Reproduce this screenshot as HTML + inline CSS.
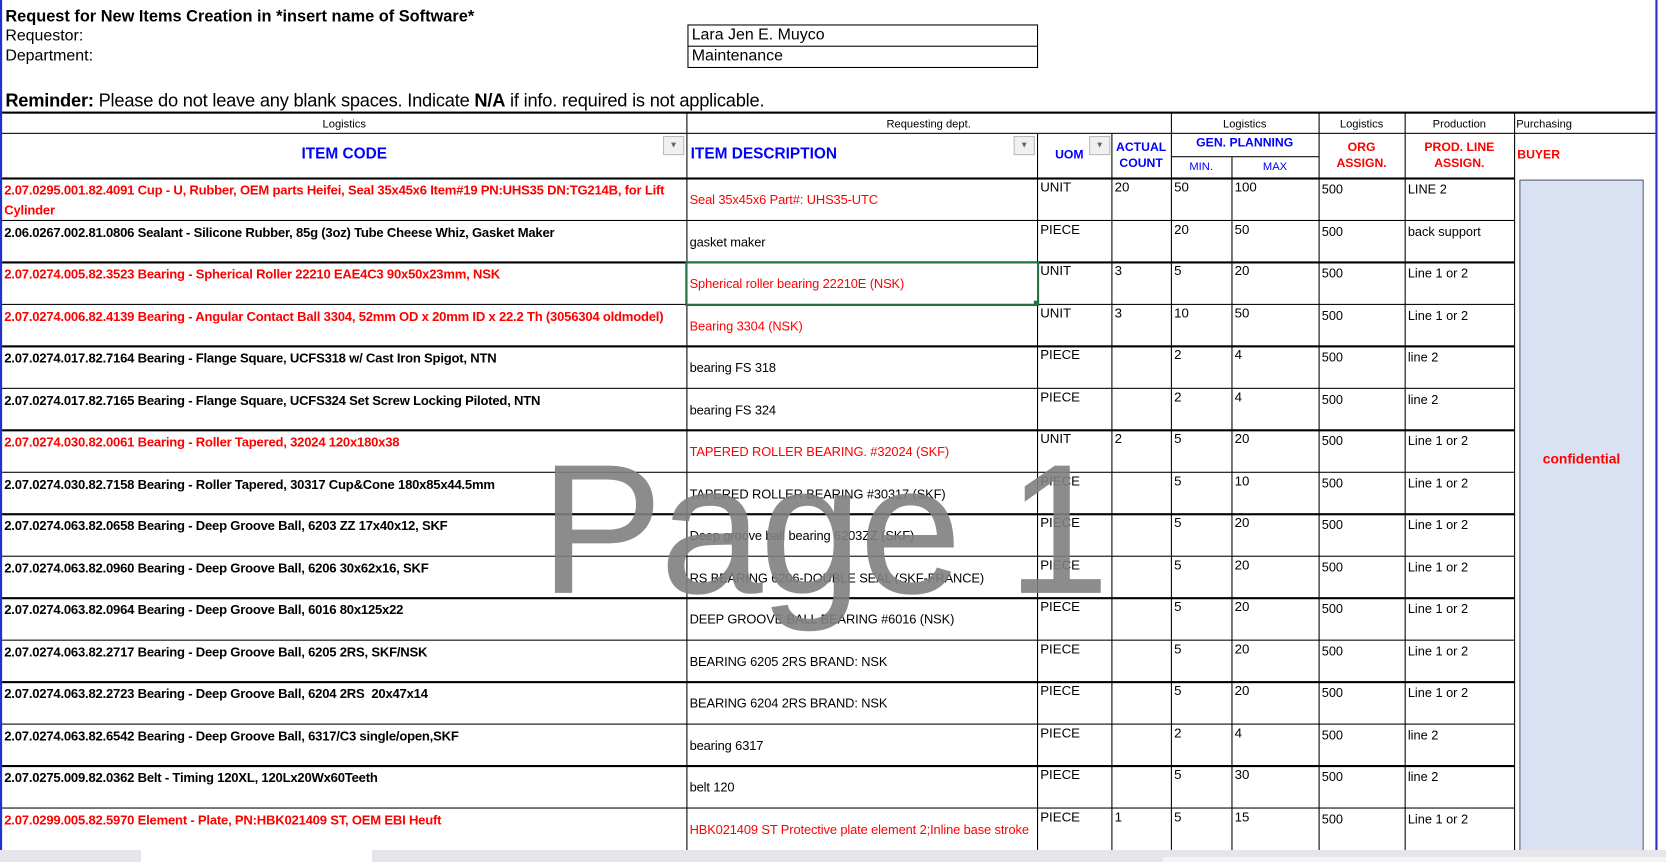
<!DOCTYPE html>
<html><head><meta charset="utf-8"><style>
*{margin:0;padding:0;box-sizing:border-box}
body{width:1666px;height:862px;overflow:hidden;background:#fff;position:relative;font-family:"Liberation Sans",Arial,sans-serif;color:#000}
#w{position:absolute;left:0;top:0;width:1568px;height:800px;transform:scale(1.0625);transform-origin:0 0}
.a{position:absolute;white-space:nowrap}
.v{position:absolute;top:106px;height:694px;width:1px;background:#000}
.h{position:absolute;left:2px;width:1423px;height:1.6px;background:#000}
.r{position:absolute;left:0;width:1558px;height:40px}
.r span{position:absolute;white-space:nowrap;overflow:hidden}
.c1{left:4px;top:2px;width:640px;font-weight:bold;font-size:12.3px;letter-spacing:-0.2px;line-height:19px}
.c2{left:649px;top:13px;width:326px;font-size:12.1px;letter-spacing:-0.1px}
.c3{left:979px;top:1px;font-size:12.5px}
.c4{left:1049px;top:1px;font-size:12.5px}
.c5{left:1105px;top:1px;font-size:12.5px}
.c6{left:1162px;top:1px;font-size:12.5px}
.c7{left:1244px;top:3px;font-size:12px}
.c8{left:1325px;top:3px;font-size:12px}
.red{color:#f00}
.hd{position:absolute;font-size:10.5px;text-align:center}
.bl{color:#00f;font-weight:bold}
.rd{color:#f00;font-weight:bold}
</style></head><body>
<div id="w">
<div class="a" style="left:0;top:0;width:2px;height:800px;background:#2233cc"></div>
<div class="a" style="left:1558px;top:0;width:2px;height:800px;background:#2233cc"></div>
<div class="a" style="left:5px;top:7px;font-size:15.4px;font-weight:bold">Request for New Items Creation in *insert name of Software*</div>
<div class="a" style="left:5px;top:25px;font-size:15px">Requestor:</div>
<div class="a" style="left:5px;top:44px;font-size:15px">Department:</div>
<div class="a" style="left:647px;top:23px;width:330px;height:41px;border:1px solid #000"></div>
<div class="a" style="left:647px;top:43px;width:330px;height:1px;background:#000"></div>
<div class="a" style="left:651px;top:24px;font-size:15px">Lara Jen E. Muyco</div>
<div class="a" style="left:651px;top:44px;font-size:15px">Maintenance</div>
<div class="a" style="left:5px;top:84px;font-size:17.2px;font-weight:bold;letter-spacing:-0.2px">Reminder: <span style="font-weight:normal">Please do not leave any blank spaces. Indicate </span>N/A<span style="font-weight:normal"> if info. required is not applicable.</span></div>

<div class="a" style="left:2px;top:105px;width:1556px;height:2px;background:#000"></div>
<div class="a" style="left:2px;top:125px;width:1556px;height:1px;background:#000"></div>
<div class="a" style="left:1102px;top:147px;width:139px;height:1px;background:#000"></div>
<div class="a" style="left:2px;top:167px;width:1423px;height:1.6px;background:#000"></div>
<div class="v" style="left:646px"></div>
<div class="v" style="left:976px;top:126px;height:674px"></div>
<div class="v" style="left:1046px;top:126px;height:674px"></div>
<div class="v" style="left:1102px"></div>
<div class="v" style="left:1159px;top:148px;height:652px"></div>
<div class="v" style="left:1241px"></div>
<div class="v" style="left:1322px"></div>
<div class="v" style="left:1425px"></div>

<div class="hd" style="left:2px;width:644px;top:111px">Logistics</div>
<div class="hd" style="left:646px;width:456px;top:111px">Requesting dept.</div>
<div class="hd" style="left:1102px;width:139px;top:111px">Logistics</div>
<div class="hd" style="left:1241px;width:81px;top:111px">Logistics</div>
<div class="hd" style="left:1322px;width:103px;top:111px">Production</div>
<div class="hd" style="left:1427px;top:111px">Purchasing</div>
<div class="a bl" style="left:2px;width:644px;text-align:center;top:137px;font-size:14.5px">ITEM CODE</div>
<div class="a bl" style="left:650px;top:137px;font-size:14.5px">ITEM DESCRIPTION</div>
<div class="a" style="left:624px;top:128px;width:20px;height:18px;background:#f0f0f0;border:1px solid #bbb;font-size:8px;color:#666;text-align:center;line-height:16px">▼</div>
<div class="a" style="left:954px;top:128px;width:20px;height:18px;background:#f0f0f0;border:1px solid #bbb;font-size:8px;color:#666;text-align:center;line-height:16px">▼</div>
<div class="a" style="left:1025px;top:128px;width:20px;height:18px;background:#f0f0f0;border:1px solid #bbb;font-size:8px;color:#666;text-align:center;line-height:16px">▼</div>
<div class="a bl" style="left:993px;top:140px;font-size:11.5px">UOM</div>
<div class="a bl" style="left:1046px;width:56px;text-align:center;top:132px;font-size:11.5px;line-height:15px">ACTUAL<br>COUNT</div>
<div class="a bl" style="left:1102px;width:139px;text-align:center;top:129px;font-size:11.5px">GEN. PLANNING</div>
<div class="hd" style="left:1102px;width:57px;top:151px;color:#00f">MIN.</div>
<div class="hd" style="left:1159px;width:82px;top:151px;color:#00f">MAX</div>
<div class="a rd" style="left:1241px;width:81px;text-align:center;top:132px;font-size:11.5px;line-height:15px">ORG<br>ASSIGN.</div>
<div class="a rd" style="left:1322px;width:103px;text-align:center;top:132px;font-size:11.5px;line-height:15px">PROD. LINE<br>ASSIGN.</div>
<div class="a rd" style="left:1428px;top:140px;font-size:11.5px">BUYER</div>

<div class="r" style="top:168px"><span class="c1 red">2.07.0295.001.82.4091 Cup - U, Rubber, OEM parts Heifei, Seal 35x45x6 Item#19 PN:UHS35 DN:TG214B, for Lift<br>Cylinder</span><span class="c2 red">Seal 35x45x6 Part#: UHS35-UTC</span><span class="c3">UNIT</span><span class="c4">20</span><span class="c5">50</span><span class="c6">100</span><span class="c7">500</span><span class="c8">LINE 2</span></div>
<div class="h" style="top:206.5px"></div>
<div class="r" style="top:207.5px"><span class="c1">2.06.0267.002.81.0806 Sealant - Silicone Rubber, 85g (3oz) Tube Cheese Whiz, Gasket Maker</span><span class="c2">gasket maker</span><span class="c3">PIECE</span><span class="c5">20</span><span class="c6">50</span><span class="c7">500</span><span class="c8">back support</span></div>
<div class="h" style="top:246px"></div>
<div class="r" style="top:247px"><span class="c1 red">2.07.0274.005.82.3523 Bearing - Spherical Roller 22210 EAE4C3 90x50x23mm, NSK</span><span class="c2 red">Spherical roller bearing 22210E (NSK)</span><span class="c3">UNIT</span><span class="c4">3</span><span class="c5">5</span><span class="c6">20</span><span class="c7">500</span><span class="c8">Line 1 or 2</span></div>
<div class="h" style="top:285.5px"></div>
<div class="r" style="top:286.5px"><span class="c1 red">2.07.0274.006.82.4139 Bearing - Angular Contact Ball 3304, 52mm OD x 20mm ID x 22.2 Th (3056304 oldmodel)</span><span class="c2 red">Bearing 3304 (NSK)</span><span class="c3">UNIT</span><span class="c4">3</span><span class="c5">10</span><span class="c6">50</span><span class="c7">500</span><span class="c8">Line 1 or 2</span></div>
<div class="h" style="top:325px"></div>
<div class="r" style="top:326px"><span class="c1">2.07.0274.017.82.7164 Bearing - Flange Square, UCFS318 w/ Cast Iron Spigot, NTN</span><span class="c2">bearing FS 318</span><span class="c3">PIECE</span><span class="c5">2</span><span class="c6">4</span><span class="c7">500</span><span class="c8">line 2</span></div>
<div class="h" style="top:364.5px"></div>
<div class="r" style="top:365.5px"><span class="c1">2.07.0274.017.82.7165 Bearing - Flange Square, UCFS324 Set Screw Locking Piloted, NTN</span><span class="c2">bearing FS 324</span><span class="c3">PIECE</span><span class="c5">2</span><span class="c6">4</span><span class="c7">500</span><span class="c8">line 2</span></div>
<div class="h" style="top:404px"></div>
<div class="r" style="top:405px"><span class="c1 red">2.07.0274.030.82.0061 Bearing - Roller Tapered, 32024 120x180x38</span><span class="c2 red">TAPERED ROLLER BEARING. #32024 (SKF)</span><span class="c3">UNIT</span><span class="c4">2</span><span class="c5">5</span><span class="c6">20</span><span class="c7">500</span><span class="c8">Line 1 or 2</span></div>
<div class="h" style="top:443.5px"></div>
<div class="r" style="top:444.5px"><span class="c1">2.07.0274.030.82.7158 Bearing - Roller Tapered, 30317 Cup&amp;Cone 180x85x44.5mm</span><span class="c2">TAPERED ROLLER BEARING #30317 (SKF)</span><span class="c3">PIECE</span><span class="c5">5</span><span class="c6">10</span><span class="c7">500</span><span class="c8">Line 1 or 2</span></div>
<div class="h" style="top:483px"></div>
<div class="r" style="top:484px"><span class="c1">2.07.0274.063.82.0658 Bearing - Deep Groove Ball, 6203 ZZ 17x40x12, SKF</span><span class="c2">Deep groove ball bearing 6203ZZ (SKF)</span><span class="c3">PIECE</span><span class="c5">5</span><span class="c6">20</span><span class="c7">500</span><span class="c8">Line 1 or 2</span></div>
<div class="h" style="top:522.5px"></div>
<div class="r" style="top:523.5px"><span class="c1">2.07.0274.063.82.0960 Bearing - Deep Groove Ball, 6206 30x62x16, SKF</span><span class="c2">RS BEARING 6206-DOUBLE SEAL (SKF-FRANCE)</span><span class="c3">PIECE</span><span class="c5">5</span><span class="c6">20</span><span class="c7">500</span><span class="c8">Line 1 or 2</span></div>
<div class="h" style="top:562px"></div>
<div class="r" style="top:563px"><span class="c1">2.07.0274.063.82.0964 Bearing - Deep Groove Ball, 6016 80x125x22</span><span class="c2">DEEP GROOVE BALL BEARING #6016 (NSK)</span><span class="c3">PIECE</span><span class="c5">5</span><span class="c6">20</span><span class="c7">500</span><span class="c8">Line 1 or 2</span></div>
<div class="h" style="top:601.5px"></div>
<div class="r" style="top:602.5px"><span class="c1">2.07.0274.063.82.2717 Bearing - Deep Groove Ball, 6205 2RS, SKF/NSK</span><span class="c2">BEARING 6205 2RS BRAND: NSK</span><span class="c3">PIECE</span><span class="c5">5</span><span class="c6">20</span><span class="c7">500</span><span class="c8">Line 1 or 2</span></div>
<div class="h" style="top:641px"></div>
<div class="r" style="top:642px"><span class="c1">2.07.0274.063.82.2723 Bearing - Deep Groove Ball, 6204 2RS&nbsp; 20x47x14</span><span class="c2">BEARING 6204 2RS BRAND: NSK</span><span class="c3">PIECE</span><span class="c5">5</span><span class="c6">20</span><span class="c7">500</span><span class="c8">Line 1 or 2</span></div>
<div class="h" style="top:680.5px"></div>
<div class="r" style="top:681.5px"><span class="c1">2.07.0274.063.82.6542 Bearing - Deep Groove Ball, 6317/C3 single/open,SKF</span><span class="c2">bearing 6317</span><span class="c3">PIECE</span><span class="c5">2</span><span class="c6">4</span><span class="c7">500</span><span class="c8">line 2</span></div>
<div class="h" style="top:720px"></div>
<div class="r" style="top:721px"><span class="c1">2.07.0275.009.82.0362 Belt - Timing 120XL, 120Lx20Wx60Teeth</span><span class="c2">belt 120</span><span class="c3">PIECE</span><span class="c5">5</span><span class="c6">30</span><span class="c7">500</span><span class="c8">line 2</span></div>
<div class="h" style="top:759.5px"></div>
<div class="r" style="top:760.5px"><span class="c1 red">2.07.0299.005.82.5970 Element - Plate, PN:HBK021409 ST, OEM EBI Heuft</span><span class="c2 red" style="width:326px">HBK021409 ST Protective plate element 2;Inline base stroke</span><span class="c3">PIECE</span><span class="c4">1</span><span class="c5">5</span><span class="c6">15</span><span class="c7">500</span><span class="c8">Line 1 or 2</span></div>

<div class="a" style="left:645px;top:245.5px;width:333px;height:42px;border:2px solid #217346"></div>
<div class="a" style="left:973px;top:283px;width:5px;height:5px;background:#217346"></div>

<div class="a" style="left:1430px;top:169px;width:117px;height:640px;background:#d9e1f2;border:1px solid #50607a"></div>
<div class="a" style="left:1430px;top:424px;width:117px;text-align:center;color:#f00;font-weight:bold;font-size:13px">confidential</div>

<div class="a" style="left:508px;top:411px;font-size:174px;color:#808080;opacity:0.9;line-height:1;letter-spacing:-3px">Page 1</div>
</div>
<div class="a" style="left:0;top:850px;width:1666px;height:12px;background:#e6e6ea"></div>
<div class="a" style="left:141px;top:850px;width:231px;height:12px;background:#fff"></div>
<div class="a" style="left:1163px;top:857px;width:503px;height:5px;background:#f4f4f6"></div>
</body></html>
